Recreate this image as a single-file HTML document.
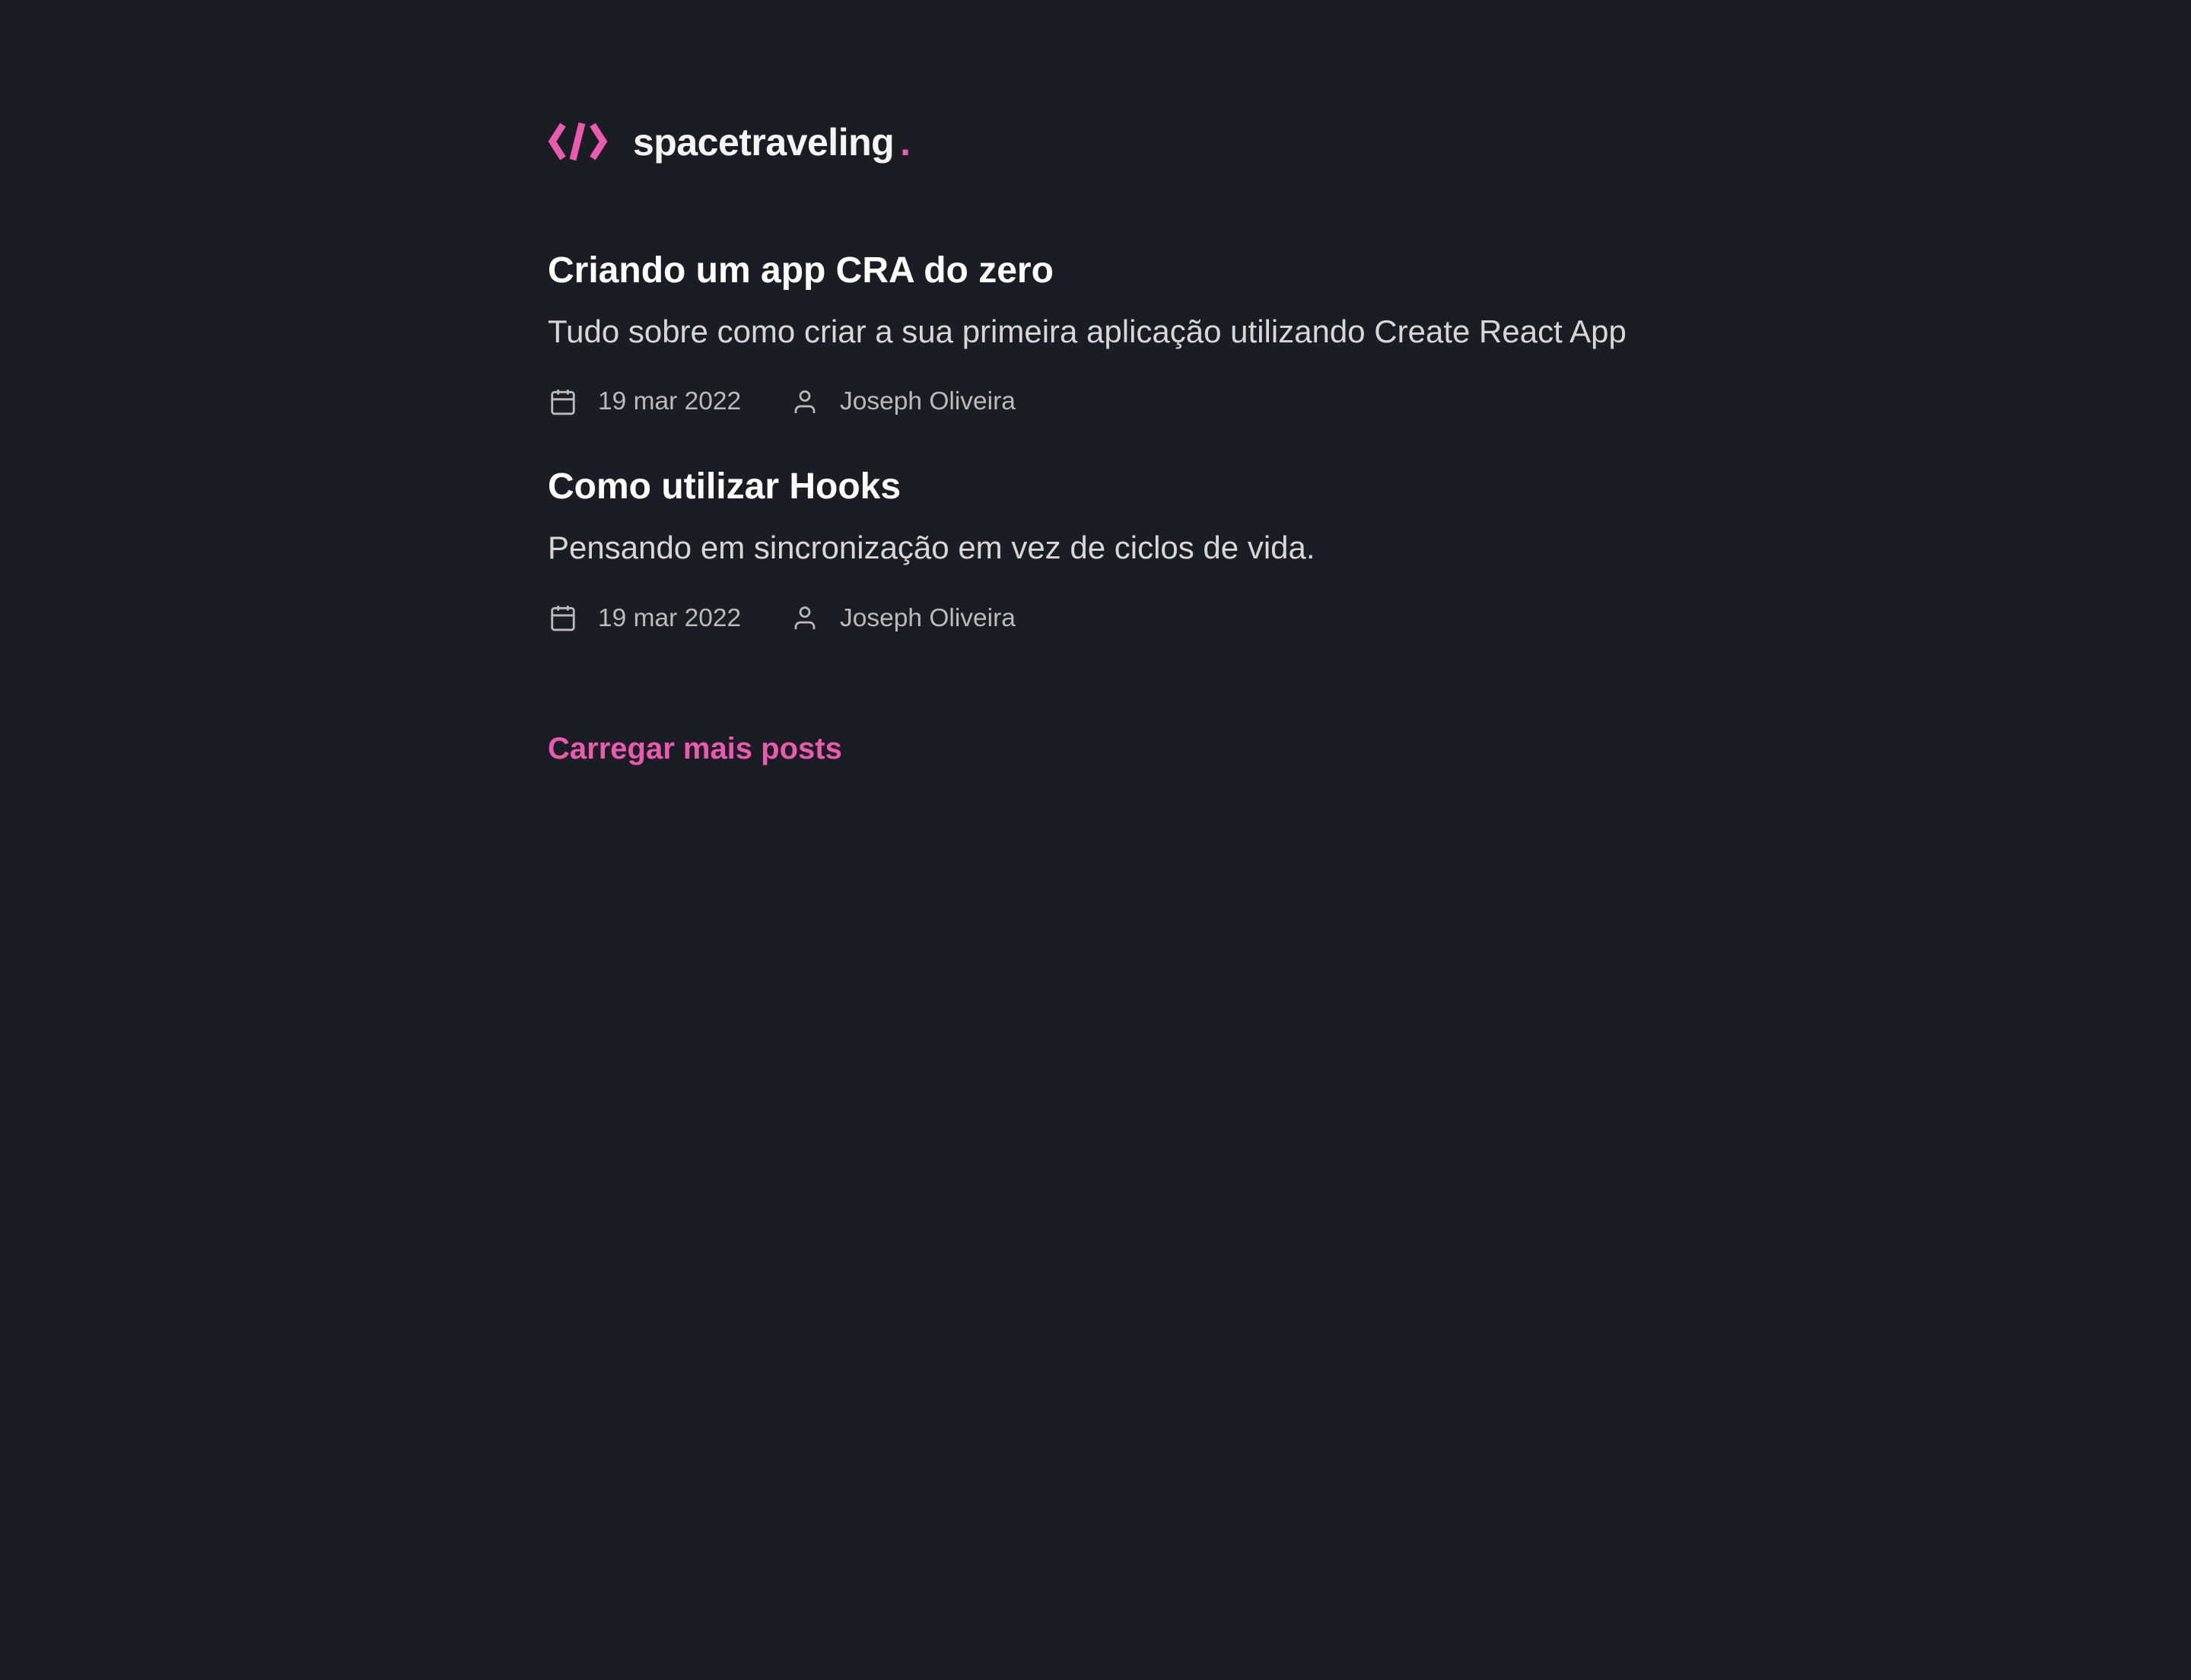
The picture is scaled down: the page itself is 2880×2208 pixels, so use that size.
<!DOCTYPE html>
<html><head><meta charset="utf-8"><style>
html,body{margin:0;padding:0;background:#1a1d23;width:2880px;height:2208px;overflow:hidden;font-family:"Liberation Sans",sans-serif}
.a{position:absolute;white-space:nowrap;line-height:1}
.t{font-weight:bold;color:#fff;font-size:48px}
.s{color:#d7d7d7;font-size:42px}
.m{color:#bbbbbb;font-size:33.5px}
</style></head><body>
<svg class="a" style="left:720px;top:158px" width="82" height="56" viewBox="0 0 82 56">
<path d="M20 6 L6 28 L20 50" stroke="#eb5aaf" stroke-width="9" fill="none"/>
<path d="M33 52 L45 4" stroke="#eb5aaf" stroke-width="9" fill="none"/>
<path d="M59 6 L73 28 L59 50" stroke="#eb5aaf" stroke-width="9" fill="none"/>
</svg>
<div class="a" style="left:832px;top:162px;font-size:50px;font-weight:bold;color:#f5f5f5;letter-spacing:-0.5px">spacetraveling<span style="color:#eb5aaf;margin-left:8px">.</span></div>

<div class="a t" style="left:720px;top:332px">Criando um app CRA do zero</div>
<div class="a s" style="left:720px;top:415px">Tudo sobre como criar a sua primeira aplicação utilizando Create React App</div>
<svg class="a" style="left:721px;top:508px" width="38" height="40" viewBox="0 0 24 24" fill="none" stroke="#bbb" stroke-width="1.8"><rect x="3" y="4" width="18" height="18" rx="2"/><path d="M16 2v4M8 2v4M3 10h18"/></svg>
<div class="a m" style="left:786px;top:511px">19 mar 2022</div>
<svg class="a" style="left:1040px;top:508px" width="36" height="40" viewBox="0 0 24 24" fill="none" stroke="#bbb" stroke-width="1.8"><path d="M20 22v-2a4 4 0 0 0-4-4H8a4 4 0 0 0-4 4v2"/><circle cx="12" cy="7" r="4"/></svg>
<div class="a m" style="left:1104px;top:511px">Joseph Oliveira</div>

<div class="a t" style="left:720px;top:616px">Como utilizar Hooks</div>
<div class="a s" style="left:720px;top:699px">Pensando em sincronização em vez de ciclos de vida.</div>
<svg class="a" style="left:721px;top:792px" width="38" height="40" viewBox="0 0 24 24" fill="none" stroke="#bbb" stroke-width="1.8"><rect x="3" y="4" width="18" height="18" rx="2"/><path d="M16 2v4M8 2v4M3 10h18"/></svg>
<div class="a m" style="left:786px;top:796px">19 mar 2022</div>
<svg class="a" style="left:1040px;top:792px" width="36" height="40" viewBox="0 0 24 24" fill="none" stroke="#bbb" stroke-width="1.8"><path d="M20 22v-2a4 4 0 0 0-4-4H8a4 4 0 0 0-4 4v2"/><circle cx="12" cy="7" r="4"/></svg>
<div class="a m" style="left:1104px;top:796px">Joseph Oliveira</div>

<div class="a" style="left:720px;top:964px;font-size:40px;font-weight:bold;color:#eb5aaf">Carregar mais posts</div>
</body></html>
